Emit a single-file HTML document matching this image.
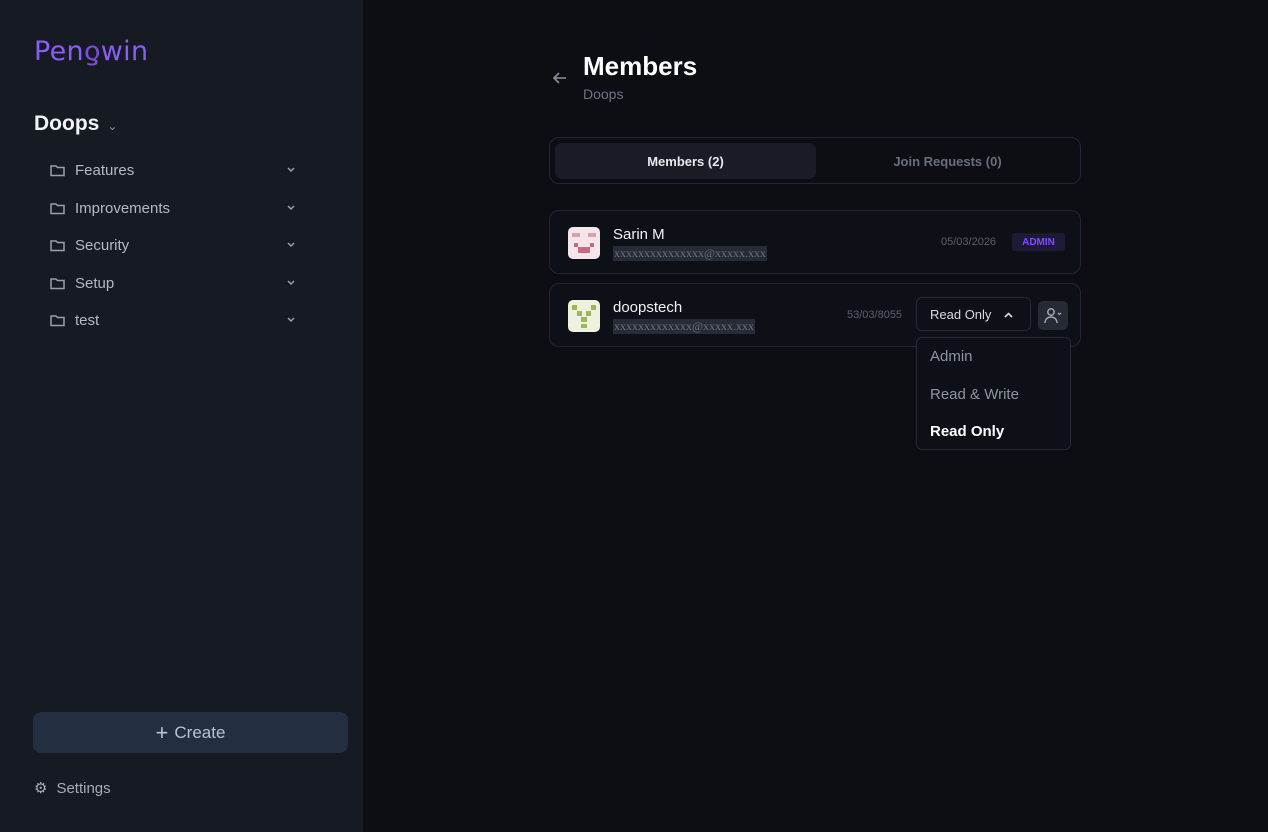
<!DOCTYPE html>
<html><head><meta charset="utf-8"><style>
*{box-sizing:border-box;margin:0;padding:0}
body{width:1268px;height:832px;background:#0c0e14;font-family:"Liberation Sans",sans-serif;position:relative;overflow:hidden;color:#e6e8ee}
.sb{position:absolute;left:0;top:0;width:363px;height:832px;background:#161a23}
.logo{position:absolute;left:34px;top:36px;font-size:27px;color:#8b5cf6;font-family:"DejaVu Sans",sans-serif;letter-spacing:0.3px}
.ws{position:absolute;left:34px;top:112px;font-size:21px;font-weight:bold;color:#f2f3f6}
.ws span{font-size:12px;color:#8a90a0;margin-left:8px;font-weight:normal}
.item{position:absolute;left:50px;width:250px;height:20px;font-size:15px;color:#b4b9c5;display:flex;align-items:center}
.item svg{margin-right:10px}
.item svg.ch{position:absolute;left:236px;top:6px;margin:0}
.create{position:absolute;left:33px;top:712px;width:315px;height:41px;background:#232e40;border-radius:8px;color:#b8c2d2;font-size:17px;display:flex;align-items:center;justify-content:center}
.set{position:absolute;left:34px;top:779px;font-size:15px;color:#a6acb8;display:flex;align-items:center}
.title{position:absolute;left:583px;top:51px;font-size:26px;font-weight:bold;color:#fff}
.sub{position:absolute;left:583px;top:86px;font-size:14px;color:#6d7382}
.tabs{position:absolute;left:549px;top:137px;width:532px;height:47px;border:1px solid #232733;border-radius:10px}
.tab1{position:absolute;left:5px;top:5px;width:261px;height:36px;background:#191c25;border-radius:7px;font-size:13px;font-weight:bold;color:#e8e9ee;display:flex;align-items:center;justify-content:center}
.tab2{position:absolute;left:268px;top:5px;width:259px;height:36px;font-size:13px;font-weight:bold;color:#686e7c;display:flex;align-items:center;justify-content:center}
.card{position:absolute;left:549px;width:532px;height:64px;border:1px solid #222632;border-radius:10px;background:#0d1016}
.av{position:absolute;left:18px;top:16px;width:32px;height:32px;border-radius:5px}
.nm{position:absolute;left:63px;top:15px;font-size:15px;color:#f0f1f4}
.em{position:absolute;left:63px;top:35px;font-size:12px;color:#6b7080;background:#272b36;padding:0 1px;font-family:"Liberation Serif",serif}
.dt{position:absolute;font-size:11px;color:#5a5f6c}
.badge{position:absolute;left:462px;top:22px;width:53px;height:18px;background:#1e1a36;border-radius:3px;color:#7c4dff;font-size:10px;font-weight:bold;display:flex;align-items:center;justify-content:center}
.sel{position:absolute;left:366px;top:13px;width:115px;height:34px;border:1px solid #262a35;border-radius:6px;font-size:13px;color:#d8dae0;padding-left:13px;display:flex;align-items:center}
.ub{position:absolute;left:488px;top:17px;width:30px;height:29px;background:#262a35;border-radius:5px;display:flex;align-items:center;justify-content:center}
.menu{position:absolute;left:916px;top:337px;width:155px;height:113px;border:1px solid #262a35;border-radius:6px;background:#0d1016}
.menu div{position:absolute;left:13px;font-size:15px;color:#8d93a0}
</style></head><body>
<div class="sb">
<div class="logo">Pen<span style="color:#7c4dd8">ƍ</span>win</div>
<div class="ws">Doops<span>⌄</span></div>
<div class="item" style="top:160px"><svg width="15" height="13" viewBox="0 0 15 13"><path d="M1 2h5l1.5 1.5H14V11.5H1z" fill="none" stroke="#9aa0ab" stroke-width="1.5"/></svg>Features<svg class="ch" width="10" height="8" viewBox="0 0 10 8"><path d="M2 2l3 3 3-3" stroke="#9aa0ab" stroke-width="1.5" fill="none"/></svg></div>
<div class="item" style="top:198px"><svg width="15" height="13" viewBox="0 0 15 13"><path d="M1 2h5l1.5 1.5H14V11.5H1z" fill="none" stroke="#9aa0ab" stroke-width="1.5"/></svg>Improvements<svg class="ch" width="10" height="8" viewBox="0 0 10 8"><path d="M2 2l3 3 3-3" stroke="#9aa0ab" stroke-width="1.5" fill="none"/></svg></div>
<div class="item" style="top:235px"><svg width="15" height="13" viewBox="0 0 15 13"><path d="M1 2h5l1.5 1.5H14V11.5H1z" fill="none" stroke="#9aa0ab" stroke-width="1.5"/></svg>Security<svg class="ch" width="10" height="8" viewBox="0 0 10 8"><path d="M2 2l3 3 3-3" stroke="#9aa0ab" stroke-width="1.5" fill="none"/></svg></div>
<div class="item" style="top:273px"><svg width="15" height="13" viewBox="0 0 15 13"><path d="M1 2h5l1.5 1.5H14V11.5H1z" fill="none" stroke="#9aa0ab" stroke-width="1.5"/></svg>Setup<svg class="ch" width="10" height="8" viewBox="0 0 10 8"><path d="M2 2l3 3 3-3" stroke="#9aa0ab" stroke-width="1.5" fill="none"/></svg></div>
<div class="item" style="top:310px"><svg width="15" height="13" viewBox="0 0 15 13"><path d="M1 2h5l1.5 1.5H14V11.5H1z" fill="none" stroke="#9aa0ab" stroke-width="1.5"/></svg>test<svg class="ch" width="10" height="8" viewBox="0 0 10 8"><path d="M2 2l3 3 3-3" stroke="#9aa0ab" stroke-width="1.5" fill="none"/></svg></div>
<div class="create"><span style="font-size:22px;margin-right:6px;font-weight:300">+</span>Create</div>
<div class="set"><span style="font-size:15px;margin-right:9px">⚙</span>Settings</div>
</div>
<svg style="position:absolute;left:552px;top:71px" width="16" height="14" viewBox="0 0 16 14"><path d="M14 7H2M7 2L2 7l5 5" stroke="#8a90a0" stroke-width="1.6" fill="none"/></svg>
<div class="title">Members</div>
<div class="sub">Doops</div>
<div class="tabs"><div class="tab1">Members (2)</div><div class="tab2">Join Requests (0)</div></div>
<div class="card" style="top:210px">
<div class="av" style="background:#f4e6ea"><svg width="32" height="32"><rect x="4" y="6" width="8" height="4" fill="#d9a0ae"/><rect x="20" y="6" width="8" height="4" fill="#d9a0ae"/><rect x="6" y="16" width="4" height="4" fill="#c46c84"/><rect x="22" y="16" width="4" height="4" fill="#c46c84"/><rect x="10" y="20" width="12" height="6" fill="#c46c84"/></svg></div>
<div class="nm">Sarin M</div><div class="em">xxxxxxxxxxxxxxx@xxxxx.xxx</div>
<div class="dt" style="left:391px;top:25px">05/03/2026</div>
<div class="badge">ADMIN</div>
</div>
<div class="card" style="top:283px">
<div class="av" style="background:#eef2dc"><svg width="32" height="32"><rect x="4" y="5" width="5" height="5" fill="#9ab85a"/><rect x="23" y="5" width="5" height="5" fill="#9ab85a"/><rect x="9" y="11" width="5" height="5" fill="#9ab85a"/><rect x="18" y="11" width="5" height="5" fill="#9ab85a"/><rect x="13" y="17" width="6" height="5" fill="#9ab85a"/><rect x="13" y="24" width="6" height="4" fill="#9ab85a"/></svg></div>
<div class="nm">doopstech</div><div class="em">xxxxxxxxxxxxx@xxxxx.xxx</div>
<div class="dt" style="left:297px;top:25px">53/03/8055</div>
<div class="sel">Read Only<svg style="position:absolute;right:16px;top:13px" width="11" height="8" viewBox="0 0 11 8"><path d="M2 6l3.5-3.5L9 6" stroke="#d8dae0" stroke-width="1.6" fill="none"/></svg></div>
<div class="ub"><svg width="20" height="18" viewBox="0 0 20 18"><circle cx="8" cy="5" r="3.2" stroke="#a0a6b2" stroke-width="1.5" fill="none"/><path d="M2 16c0-4 3-6 6-6s6 2 6 6" stroke="#a0a6b2" stroke-width="1.5" fill="none"/><path d="M15 6l1.5 1.5L18 6" stroke="#a0a6b2" stroke-width="1.3" fill="none"/></svg></div>
</div>
<div class="menu"><div style="top:10px">Admin</div><div style="top:48px">Read &amp; Write</div><div style="top:85px;color:#fff;font-weight:bold">Read Only</div></div>
</body></html>
